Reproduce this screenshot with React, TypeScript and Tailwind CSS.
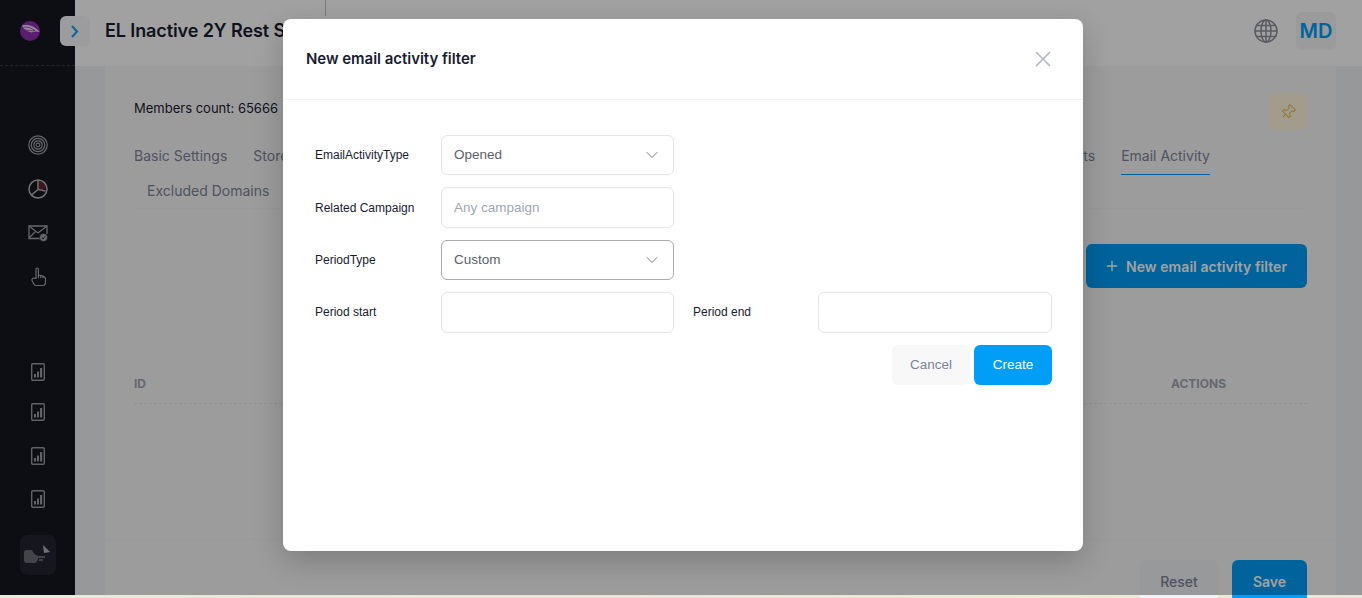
import React from "react";
import { ChevronDown, X, Plus, Pin } from "lucide-react";

const inter = "font-['Inter',sans-serif]";
const arial = "font-['Liberation_Sans',Arial,sans-serif]";

function Logo() {
  return (
    <svg width="20" height="20" viewBox="0 0 20 20">
      <circle cx="10" cy="10" r="10" fill="#8f2fb0" />
      <path d="M2 4.500c6-1.500 13 .5 17.500 6.500-3.500-1-6-.5-8 .5C7 10.500 3.500 8 2 4.500z" fill="#ecdff2" />
      <path d="M5.500 8.800c3.500 1 6.500 1.200 10 .5" stroke="#8f2fb0" strokeWidth="0.8" fill="none" />
      <path d="M3.500 6c4-.3 8 1 11.500 3.500" stroke="#8f2fb0" strokeWidth="0.8" fill="none" />
    </svg>
  );
}

function Target() {
  return (
    <svg width="20" height="20" viewBox="0 0 20 20" fill="none" stroke="#a3a4ab" strokeWidth="1.200">
      <circle cx="10" cy="10" r="9.200" />
      <circle cx="10" cy="10" r="6.700" />
      <circle cx="10" cy="10" r="4.200" />
      <circle cx="10" cy="10" r="1.800" />
    </svg>
  );
}

function PieIcon() {
  return (
    <svg width="20" height="20" viewBox="0 0 20 20" fill="none" stroke="#b4b5bb" strokeWidth="1.500">
      <path d="M10.800 1.800c3.400.3 6.700 3.100 7.200 7.700l-7.200 1z" fill="#6b2130" stroke="none" />
      <circle cx="10" cy="10" r="9" />
      <path d="M10 1v9.500l7.500 1.500" />
      <path d="M10 10.500l-6.500 5.500" />
    </svg>
  );
}

function MailIcon() {
  return (
    <svg width="20" height="17" viewBox="0 0 20 17" fill="none" stroke="#a3a4ab" strokeWidth="1.300">
      <path d="M13 13.500H1V1h18v8" />
      <path d="M1 1l9 7 9-7M1 13l6-6" />
      <circle cx="15.500" cy="12.500" r="4" fill="#a3a4ab" stroke="#0d0e15" strokeWidth="0.5" />
      <path d="M14 12.800l1.200 1 1.800-2.300" stroke="#0d0e15" strokeWidth="0.900" />
    </svg>
  );
}

function HandIcon() {
  return (
    <svg width="16" height="20" viewBox="0 0 16 20" fill="none" stroke="#a3a4ab" strokeWidth="1.200" strokeLinejoin="round">
      <path d="M5 11.500V2.200a1.200 1.200 0 0 1 2.400 0V8l1.600.3 2 .5c2 .5 3.500 1 3.500 3v2.700c0 2-1 4-2.500 4H5c-1.500 0-2-1-2.500-2L1 13.500c-.4-1.200.4-2.500 2-2.500l2 .5z" />
      <path d="M7.400 8v3.200M9.800 8.500v2.700M12 9v2.200" />
    </svg>
  );
}

function ChartIcon() {
  return (
    <svg width="14" height="18" viewBox="0 0 14 18" fill="none">
      <rect x="0.700" y="0.700" width="12.600" height="16.600" rx="1.200" stroke="#9a9ba3" strokeWidth="1.400" />
      <rect x="3" y="11" width="2" height="3.500" fill="#9a9ba3" />
      <rect x="6" y="8.500" width="2" height="6" fill="#9a9ba3" />
      <rect x="9" y="5" width="2.200" height="9.500" fill="#9a9ba3" />
    </svg>
  );
}

function GlobeGrid() {
  return (
    <svg width="24" height="24" viewBox="0 0 24 24" fill="none" stroke="#8f919b" strokeWidth="1.500">
      <circle cx="12" cy="12" r="11" />
      <ellipse cx="12" cy="12" rx="5" ry="11" />
      <path d="M12 1v22M1 12h22M2.600 6.500h18.800M2.600 17.500h18.800" />
    </svg>
  );
}

function Sidebar() {
  return (
    <aside className="w-[75px] h-full shrink-0 bg-[#151621] flex flex-col">
      <div className="h-[66px] shrink-0 border-b border-dashed border-[#3a3b47] pl-5 pt-[21px]">
        <Logo />
      </div>
      <nav className="flex flex-col items-center pt-[57px]">
        <div className="h-11 flex items-center justify-center"><Target /></div>
        <div className="h-11 flex items-center justify-center"><PieIcon /></div>
        <div className="h-11 flex items-center justify-center"><MailIcon /></div>
        <div className="h-11 flex items-center justify-center pl-0.5"><HandIcon /></div>
      </nav>
      <nav className="flex flex-col items-center pt-[53px]">
        <div className="h-10 flex items-center justify-center"><ChartIcon /></div>
        <div className="h-10 flex items-center justify-center"><ChartIcon /></div>
        <div className="h-10 mt-1 flex items-center justify-center"><ChartIcon /></div>
        <div className="h-10 mt-[3px] flex items-center justify-center"><ChartIcon /></div>
      </nav>
      <div className="ml-5 mt-4 w-9 h-10 rounded-lg bg-[#232430] flex items-center justify-center">
        <svg width="32" height="26" viewBox="0 0 32 26">
          <path d="M2 11c0-2 1-3 3-3h5c1 3 3 5 6 6v3c0 2-2 4-4 4H5c-2 0-3-1-3-3z" fill="#6a6b75" />
          <path d="M21 3l7 7-6 1z" fill="#b4b5bb" />
          <path d="M16 15h7M17 18h4" stroke="#b4b5bb" strokeWidth="1" />
        </svg>
      </div>
    </aside>
  );
}

function Header() {
  return (
    <header className="h-[66px] shrink-0 bg-white flex items-start relative">
      <button className="absolute -left-[15px] top-4 w-[30px] h-[30px] rounded-md bg-[#f8f8fa] flex items-center justify-center">
        <svg width="10" height="13" viewBox="0 0 10 13" fill="none" stroke="#1fa4f2" strokeWidth="2.200"><path d="M2 1l5 5.500L2 12" /></svg>
      </button>
      <h1 className={`${inter} ml-[30px] mt-[18px] text-[18px] leading-[26px] tracking-[-0.1px] font-semibold text-[#181c32] whitespace-nowrap w-[220px]`}>
        EL Inactive 2Y Rest Segment
      </h1>
      <div className="w-px h-[16px] bg-[#c4c4c4]" />
      <div className="ml-auto flex items-center mr-[26px] mt-3 gap-[18px]">
        <GlobeGrid />
        <div className={`${inter} w-10 h-[38px] rounded-md bg-[#f5f5f7] flex items-center justify-center text-[20px] font-semibold text-[#009ef7]`}>
          MD
        </div>
      </div>
    </header>
  );
}

function Panel() {
  return (
    <section className={`${inter} flex-1 min-h-0 ml-[30px] mr-[26px] bg-[#f8f8f8] flex flex-col`}>
      <div className="flex-1 min-h-0 pl-[29px] pr-[29px] flex flex-col">
        <div className="flex items-start justify-between pt-[27px] h-[72px]">
          <p className="text-[13px] leading-[30px] text-[#181c32]">Members count: 65666</p>
          <div className="w-[38px] h-[37px] rounded-md bg-[#fff8dd] flex items-center justify-center">
            <Pin size={16} strokeWidth={1.4} color="#e0a020" className="rotate-45" />
          </div>
        </div>
        <div className="border-b border-[#eff2f5] h-[71px] text-[14px] text-[#7e8299]">
          <div className="flex h-[37px]">
            <span className="leading-[36px]">Basic Settings</span>
            <span className="leading-[36px] ml-[26px]">Stores</span>
            <span className="leading-[36px] ml-auto mr-[26px]">Segments</span>
            <span className="leading-[36px] h-[37px] mr-[97px] border-b border-[#009ef7]">Email Activity</span>
          </div>
          <div className="pl-[13px] leading-[31px]">Excluded Domains</div>
        </div>
        <div className="flex justify-end pt-[35px]">
          <button className="h-11 w-[221px] pr-0.5 rounded-md bg-[#009ef7] text-white text-[14px] tracking-[0.08px] font-semibold flex items-center justify-center gap-[6px]">
            <Plus size={16} />New email activity filter
          </button>
        </div>
        <div className="mt-[81px] h-[35px] border-b border-dashed border-[#e4e6ef] flex justify-between text-[12px] font-bold text-[#a1a5b7] leading-[30px]">
          <span>ID</span>
          <span className="mr-[81px]">ACTIONS</span>
        </div>
      </div>
      <div className="h-[56px] shrink-0 border-t border-[#eff2f5] pl-[29px] pr-[29px] pt-5 flex justify-end gap-[14px]">
        <button className="w-[78px] h-[42px] rounded-md bg-[#f1f2f5] text-[14px] font-medium text-[#7e8299]">Reset</button>
        <button className="w-[75px] h-[42px] rounded-md bg-[#009ef7] text-[14px] font-semibold text-white">Save</button>
      </div>
    </section>
  );
}

function Label({ children, className = "" }: { children: React.ReactNode; className?: string }) {
  return <label className={`text-[12px] text-[#181c32] ${className}`}>{children}</label>;
}

function SelectBox({ value, active }: { value: string; active?: boolean }) {
  return (
    <div className={`w-[233px] h-10 rounded-md border bg-white pl-3 pr-[11px] flex items-center justify-between text-[13.500px] text-[#5c5e6b] ${active ? "border-[#a8a9ad]" : "border-[#e5e5e8]"}`}>
      <span>{value}</span>
      <ChevronDown size={20} strokeWidth={1.2} color="#7a7c84" />
    </div>
  );
}

function Modal() {
  return (
    <div className={`${arial} absolute left-[283px] top-[19px] w-[800px] h-[532px] bg-white rounded-lg shadow-[0_10px_30px_rgba(0,0,0,0.2)]`}>
      <div className="h-[81px] border-b border-[#f0f0f2] pl-[23px] pr-[27px] flex items-center justify-between">
        <h2 className={`${inter} text-[15px] tracking-[-0.03px] font-semibold text-[#181c32]`}>New email activity filter</h2>
        <X size={26} strokeWidth={1.6} color="#b5b8c6" />
      </div>
      <div className="pt-[35px] pl-8 pr-[31px] flex flex-col">
        <div className="flex items-center h-10">
          <Label className="w-[126px]">EmailActivityType</Label>
          <SelectBox value="Opened" />
        </div>
        <div className="flex items-center h-[41px] mt-3">
          <Label className="w-[126px]">Related Campaign</Label>
          <div className="w-[233px] h-[41px] rounded-md border border-[#e5e5e8] pl-3 pt-px flex items-center text-[13.500px] text-[#a1a5b7]">Any campaign</div>
        </div>
        <div className="flex items-center h-10 mt-3">
          <Label className="w-[126px]">PeriodType</Label>
          <SelectBox value="Custom" active />
        </div>
        <div className="flex items-center h-[41px] mt-3">
          <Label className="w-[126px] -mt-0.5">Period start</Label>
          <div className="w-[233px] h-[41px] rounded-md border border-[#e5e5e8]" />
          <Label className="ml-[19px] w-[125px] -mt-0.5">Period end</Label>
          <div className="w-[234px] h-[41px] rounded-md border border-[#e5e5e8]" />
        </div>
        <div className="flex justify-end gap-1 mt-3">
          <button className="w-[78px] h-10 rounded-md bg-[#f8f8f9] text-[13.500px] text-[#7e8299]">Cancel</button>
          <button className="w-[78px] h-10 rounded-md bg-[#009ef7] text-[13.500px] text-white">Create</button>
        </div>
      </div>
    </div>
  );
}

export default function App() {
  return (
    <div className="w-[1362px] h-[598px] overflow-hidden flex flex-col">
      <div className="relative h-[595px] shrink-0 flex bg-[#eff1f4]">
        <Sidebar />
        <main className="flex-1 min-w-0 flex flex-col">
          <Header />
          <Panel />
        </main>
        <div className="absolute inset-0 bg-black/[0.37]" />
        <Modal />
      </div>
      <div className="h-[3px] bg-[linear-gradient(90deg,#e6ecd8_0%,#efe2d6_40%,#ecead0_78%,#efe4d8_100%)]" />
    </div>
  );
}
